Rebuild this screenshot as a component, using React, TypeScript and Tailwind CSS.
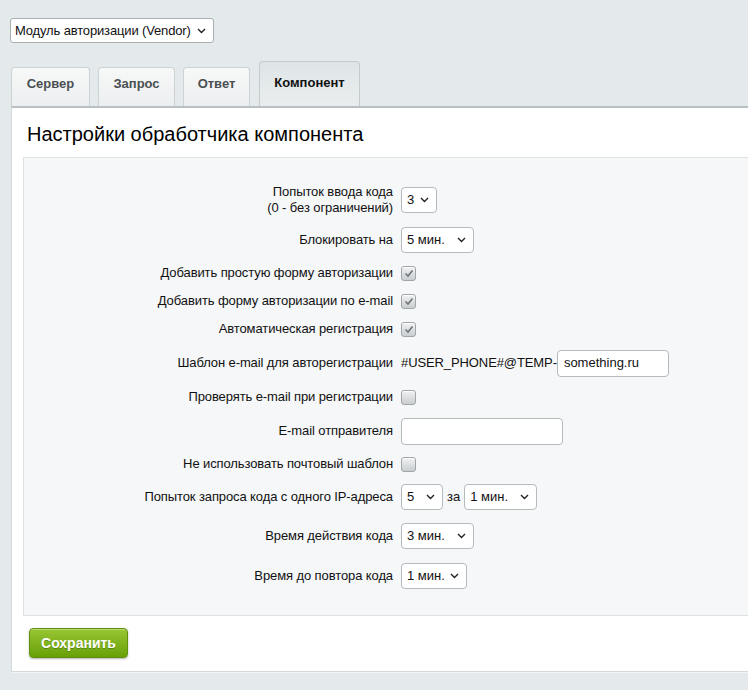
import React from 'react';

const font = { fontFamily: '"Liberation Sans", Arial, sans-serif' };

function Chevron() {
  return (
    <svg width="9" height="6" viewBox="0 0 9 6" className="shrink-0">
      <path d="M1 1 L4.5 4.5 L8 1" fill="none" stroke="#222" strokeWidth="1.4" />
    </svg>
  );
}

function Select({ value, w }: { value: string; w: string }) {
  return (
    <div
      className={`${w} h-[26px] flex items-center justify-between pl-[5px] pr-[7px] bg-white border border-[#b5babc] rounded-[4px] text-[13px] text-[#111]`}
    >
      <span>{value}</span>
      <Chevron />
    </div>
  );
}

function Check({ on }: { on?: boolean }) {
  return (
    <span className="w-[15px] h-[15px] rounded-[3px] border border-[#9fa5a8] bg-gradient-to-b from-[#f1f2f2] to-[#c9cdcf] flex items-center justify-center shadow-[inset_0_1px_0_#fff]">
      {on && (
        <svg width="10" height="9" viewBox="0 0 10 9">
          <path d="M1.5 4.5 L4 7 L8.5 1.5" fill="none" stroke="#6c7377" strokeWidth="1.6" />
        </svg>
      )}
    </span>
  );
}

function Row({ h, label, children }: { h: string; label: React.ReactNode; children: React.ReactNode }) {
  return (
    <div className={`flex items-center ${h}`}>
      <div className="w-[376px] pr-[7px] text-right text-[13px] leading-[16px] tracking-[-0.1px] text-[#111]">{label}</div>
      <div className="flex items-center gap-[4px] pl-[1px]">{children}</div>
    </div>
  );
}

const tabs = [
  { t: 'Сервер', w: 'w-[79px]' },
  { t: 'Запрос', w: 'w-[77px]' },
  { t: 'Ответ', w: 'w-[67px]' },
];

export default function App() {
  return (
    <div className="w-[748px] h-[690px] bg-[#e4eaeb] overflow-hidden" style={font}>
      <div className="pt-[18px] pl-[10px]">
        <div className="w-[204px] h-[25px] flex items-center justify-between pl-[4px] pr-[7px] bg-white border border-[#a9aeb0] rounded-[3px] text-[13px] tracking-[-0.15px] text-[#111]">
          <span>Модуль авторизации (Vendor)</span>
          <Chevron />
        </div>
      </div>

      <div className="mt-[18px] ml-[11px] flex items-end gap-[8px] h-[45px]">
        {tabs.map((x) => (
          <div
            key={x.t}
            className={`h-[39px] ${x.w} flex items-center justify-center pb-[6px] rounded-t-[4px] border border-b-0 border-[#cdd3d5] bg-gradient-to-b from-[#f7f8f8] to-[#eceff0] text-[13px] font-bold text-[#4a4f51]`}
          >
            {x.t}
          </div>
        ))}
        <div className="h-[45px] w-[101px] ml-[1px] flex items-center justify-center pb-[3px] rounded-t-[4px] border border-b-0 border-[#c4cbcd] bg-gradient-to-b from-[#dfe5e7] to-[#e9edee] text-[13px] font-bold text-[#111]">
          Компонент
        </div>
      </div>

      <div className="ml-[11px] w-[760px] h-[566px] bg-white border-t-2 border-t-[#b9c0c3] border-l border-l-[#d3d9db] border-b border-b-[#d3d9db] shadow-[0_1px_0_#f4f6f6]">
        <div className="pl-[15px] pt-[14px] h-[49px] text-[20px] leading-[24px] text-[#000]">
          Настройки обработчика компонента
        </div>
        <div className="ml-[11px] bg-[#f5f7f8] border border-[#dce1e2] pt-[22px] pb-[17px]">
          <Row h="h-[40px]" label={<>Попыток ввода кода<br />(0 - без ограничений)</>}>
            <Select value="3" w="w-[36px]" />
          </Row>
          <Row h="h-[40px]" label="Блокировать на">
            <Select value="5 мин." w="w-[73px]" />
          </Row>
          <Row h="h-[26px]" label="Добавить простую форму авторизации">
            <Check on />
          </Row>
          <Row h="h-[30px]" label="Добавить форму авторизации по e-mail">
            <Check on />
          </Row>
          <Row h="h-[26px]" label="Автоматическая регистрация">
            <Check on />
          </Row>
          <Row h="h-[42px]" label="Шаблон e-mail для авторегистрации">
            <div className="flex items-center">
              <span className="text-[13px] text-[#111] tracking-[-0.1px]">#USER_PHONE#@TEMP-</span>
              <div className="w-[112px] h-[27px] flex items-center px-[6px] bg-white border border-[#b5babc] rounded-[4px] text-[13px] text-[#111]">
                something.ru
              </div>
            </div>
          </Row>
          <Row h="h-[26px]" label="Проверять e-mail при регистрации">
            <Check />
          </Row>
          <Row h="h-[42px]" label="E-mail отправителя">
            <div className="w-[162px] h-[27px] bg-white border border-[#b5babc] rounded-[4px]" />
          </Row>
          <Row h="h-[24px]" label="Не использовать почтовый шаблон">
            <Check />
          </Row>
          <Row h="h-[42px]" label="Попыток запроса кода с одного IP-адреса">
            <Select value="5" w="w-[42px]" />
            <span className="text-[13px] text-[#111]">за</span>
            <Select value="1 мин." w="w-[73px]" />
          </Row>
          <Row h="h-[36px]" label="Время действия кода">
            <Select value="3 мин." w="w-[73px]" />
          </Row>
          <Row h="h-[44px]" label="Время до повтора кода">
            <Select value="1 мин." w="w-[66px]" />
          </Row>
        </div>
        <div className="pl-[17px] pt-[12px]">
          <button className="w-[99px] h-[30px] rounded-[4px] border border-[#5e8f0d] bg-gradient-to-b from-[#98c630] to-[#69a004] text-white text-[14px] font-bold shadow-[0_1px_2px_rgba(0,0,0,0.3),inset_0_1px_0_rgba(255,255,255,0.35)] [text-shadow:0_1px_0_rgba(0,0,0,0.25)]">
            Сохранить
          </button>
        </div>
      </div>
    </div>
  );
}
